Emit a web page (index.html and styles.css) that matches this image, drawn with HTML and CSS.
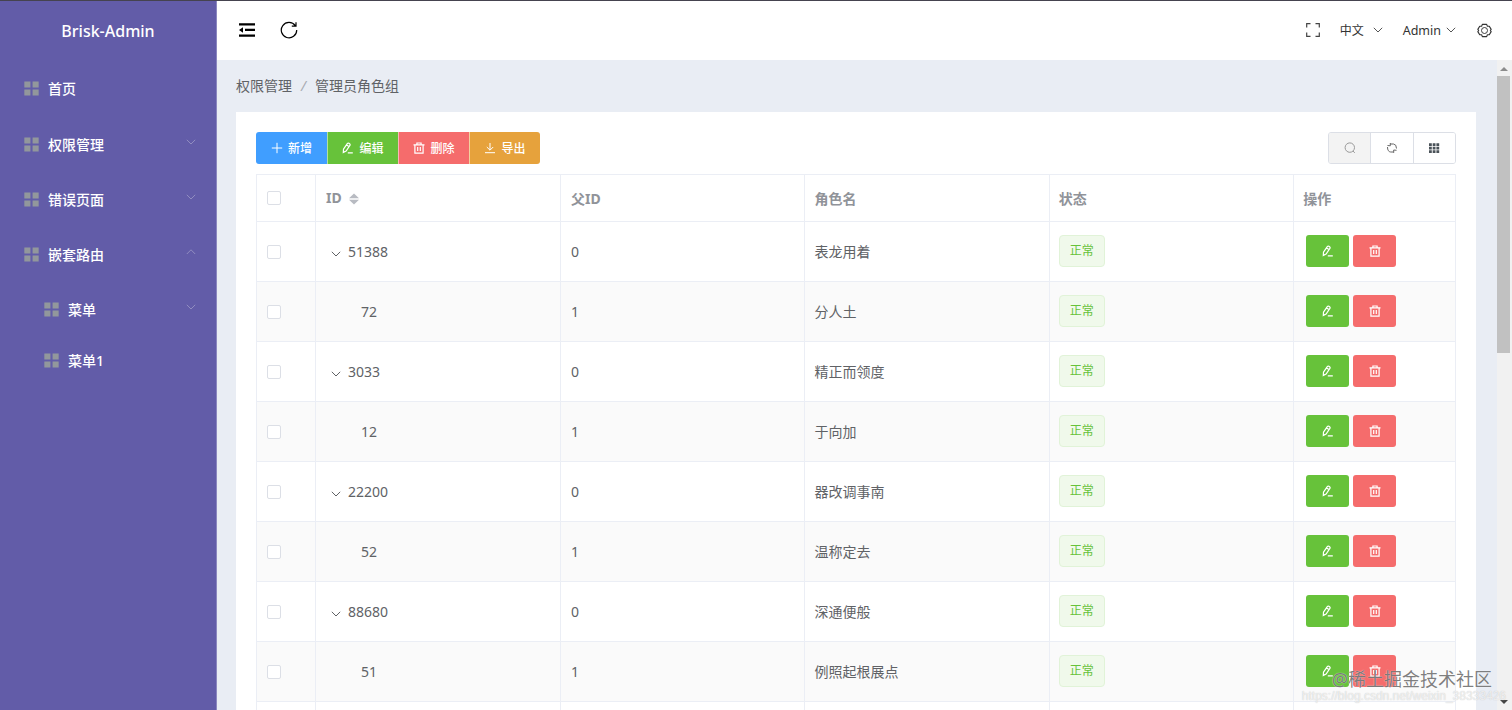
FILE: index.html
```html
<!DOCTYPE html>
<html lang="zh-CN">
<head>
<meta charset="UTF-8">
<meta name="viewport" content="width=device-width, initial-scale=1.0">
<title>Brisk-Admin</title>
<link rel="stylesheet" href="styles.css">
</head>
<body>
<!-- icons -->
<svg class="sprite" width="0" height="0">
<symbol id="i-menu" viewBox="0 0 14 14"><path fill="currentColor" d="M.3.500h5.700v5.500H.3zM8 .500h5.700v5.500H8zM.3 8h5.700v5.500H.3zM8 8h5.700v5.500H8z"/></symbol>
<symbol id="i-down" viewBox="0 0 10 10"><path d="M.8 2.800 5 7l4.200-4.200" fill="none" stroke="currentColor"/></symbol>
<symbol id="i-up" viewBox="0 0 10 10"><path d="M.8 7 5 2.800 9.200 7" fill="none" stroke="currentColor"/></symbol>
<symbol id="i-edit" viewBox="0 0 12 12"><path d="M1.500 7.200 5.300 1.600Q6 .700 6.900 1.300L7.600 1.800Q8.500 2.500 7.900 3.400L4.100 9 1.300 10.400ZM4.500 2.900 7 4.600M5.800 10.900h5" fill="none" stroke="currentColor" stroke-width="1.200"/></symbol>
<symbol id="i-delete" viewBox="0 0 12 12"><path d="M.500 2.900h11M3.900 2.700V1h4.200v1.700M1.900 2.900V11.200h8.200V2.900M4.700 5v4M7.300 5v4" fill="none" stroke="currentColor" stroke-width="1.200"/></symbol>
</svg>

<div class="container">
<aside class="sidebar">
<div class="logo">Brisk-Admin</div>
<nav class="menu">
<a class="menu-item home"><svg class="menu-icon"><use href="#i-menu"/></svg>首页</a>
<a class="menu-item"><svg class="menu-icon"><use href="#i-menu"/></svg>权限管理<svg class="arrow"><use href="#i-down"/></svg></a>
<a class="menu-item"><svg class="menu-icon"><use href="#i-menu"/></svg>错误页面<svg class="arrow"><use href="#i-down"/></svg></a>
<a class="menu-item"><svg class="menu-icon"><use href="#i-menu"/></svg>嵌套路由<svg class="arrow"><use href="#i-up"/></svg></a>
<a class="menu-item sub"><svg class="menu-icon"><use href="#i-menu"/></svg>菜单<svg class="arrow"><use href="#i-down"/></svg></a>
<a class="menu-item sub last"><svg class="menu-icon"><use href="#i-menu"/></svg>菜单1</a>
</nav>
</aside>

<div class="main">
<header class="header">
<svg class="fold" viewBox="0 0 16 14"><path fill="#000" d="M0 .300h16v2.300H0zM6 5.800h10v2.300H6zM0 11.400h16v2.300H0zM0 7l4-2.800v5.600z"/></svg>
<svg class="reload" viewBox="0 0 18 18"><path d="M15.300 4.700A7.700 7.700 0 1 0 16.700 9M16 1.200V5.200H11.800" fill="none" stroke="#000" stroke-width="1.200"/></svg>
<div class="header-right">
<svg class="full" viewBox="0 0 14 14"><path d="M.700 4.500V.700H4.500M9.500.700h3.800V4.500M13.300 9.500v3.800H9.500M4.500 13.300H.700V9.500" fill="none" stroke="#444" stroke-width="1.200"/></svg>
<span class="lang">中文</span>
<svg class="caret"><use href="#i-down"/></svg>
<span class="user">Admin</span>
<svg class="caret"><use href="#i-down"/></svg>
<svg class="setting" viewBox="0 0 16 16" fill="none" stroke="#333"><path stroke-linejoin="round" stroke-width="1.200" d="M5.700 1.500h4.600l.8 2h2l2 3.300L14.200 8l.9 1.200-2 3.300h-2l-.8 2H5.700l-.8-2h-2l-2-3.300L1.800 8 .900 6.800l2-3.300h2z"/><circle cx="8" cy="8" r="3.200"/></svg>
</div>
</header>

<div class="content">
<div class="page">
<div class="breadcrumb"><span>权限管理</span><i>/</i><span>管理员角色组</span></div>
<div class="card">
<div class="toolbar">
<div class="btn-group">
<button class="btn primary"><svg viewBox="0 0 12 12"><path d="M6 .800v10.400M.800 6h10.400" stroke="#fff"/></svg>新增</button>
<button class="btn success"><svg><use href="#i-edit"/></svg>编辑</button>
<button class="btn danger"><svg><use href="#i-delete"/></svg>删除</button>
<button class="btn warning"><svg viewBox="0 0 12 12"><path d="M6 1v7M2.800 5 6 8.200 9.200 5M1 10.700h10" fill="none" stroke="#fff"/></svg>导出</button>
</div>
<div class="tools">
<button class="tool active"><svg viewBox="0 0 12 12"><circle cx="5.800" cy="5.600" r="4.700" fill="none" stroke="#999"/><path d="m9 9 1.800 1.900" stroke="#999"/></svg></button>
<button class="tool"><svg viewBox="0 0 12 12"><path d="M4.200 2H7.500Q10.500 2.300 10.500 6.500M1.500 5Q1.500 9.700 4.700 10H7.500M1.500 3.500 4.300 3.800V1M10.500 8.300 7.700 8V10.900" fill="none" stroke="#666"/></svg></button>
<button class="tool"><svg viewBox="0 0 12 12"><path d="M1 1.300h2.800v2.600H1zM4.700 1.300h2.800v2.600H4.700zM8.400 1.300h2.800v2.600H8.400zM1 4.800h2.800v2.600H1zM4.700 4.800h2.800v2.600H4.700zM8.400 4.800h2.800v2.600H8.400zM1 8.300h2.800v2.600H1zM4.700 8.300h2.800v2.600H4.700zM8.400 8.300h2.800v2.600H8.400z" fill="#4a5258"/></svg></button>
</div>
</div>

<table class="table">
<colgroup><col class="c-check"><col class="c-id"><col class="c-pid"><col class="c-name"><col class="c-status"><col></colgroup>
<thead>
<tr><th><span class="check"></span></th><th>ID<svg class="sort" viewBox="0 0 10 12"><path fill="#b8bbc2" d="m5 .500 5 4.700H0zM5 11.500 0 6.800h10z"/></svg></th><th>父ID</th><th>角色名</th><th>状态</th><th>操作</th></tr>
</thead>
<tbody>
<tr>
<td><span class="check"></span></td>
<td class="parent"><svg class="expand"><use href="#i-down"/></svg>51388</td>
<td>0</td>
<td>表龙用着</td>
<td><span class="tag">正常</span></td>
<td class="ops"><button class="btn success"><svg><use href="#i-edit"/></svg></button><button class="btn danger"><svg><use href="#i-delete"/></svg></button></td>
</tr>
<tr>
<td><span class="check"></span></td>
<td class="child">72</td>
<td>1</td>
<td>分人土</td>
<td><span class="tag">正常</span></td>
<td class="ops"><button class="btn success"><svg><use href="#i-edit"/></svg></button><button class="btn danger"><svg><use href="#i-delete"/></svg></button></td>
</tr>
<tr>
<td><span class="check"></span></td>
<td class="parent"><svg class="expand"><use href="#i-down"/></svg>3033</td>
<td>0</td>
<td>精正而领度</td>
<td><span class="tag">正常</span></td>
<td class="ops"><button class="btn success"><svg><use href="#i-edit"/></svg></button><button class="btn danger"><svg><use href="#i-delete"/></svg></button></td>
</tr>
<tr>
<td><span class="check"></span></td>
<td class="child">12</td>
<td>1</td>
<td>于向加</td>
<td><span class="tag">正常</span></td>
<td class="ops"><button class="btn success"><svg><use href="#i-edit"/></svg></button><button class="btn danger"><svg><use href="#i-delete"/></svg></button></td>
</tr>
<tr>
<td><span class="check"></span></td>
<td class="parent"><svg class="expand"><use href="#i-down"/></svg>22200</td>
<td>0</td>
<td>器改调事南</td>
<td><span class="tag">正常</span></td>
<td class="ops"><button class="btn success"><svg><use href="#i-edit"/></svg></button><button class="btn danger"><svg><use href="#i-delete"/></svg></button></td>
</tr>
<tr>
<td><span class="check"></span></td>
<td class="child">52</td>
<td>1</td>
<td>温称定去</td>
<td><span class="tag">正常</span></td>
<td class="ops"><button class="btn success"><svg><use href="#i-edit"/></svg></button><button class="btn danger"><svg><use href="#i-delete"/></svg></button></td>
</tr>
<tr>
<td><span class="check"></span></td>
<td class="parent"><svg class="expand"><use href="#i-down"/></svg>88680</td>
<td>0</td>
<td>深通便般</td>
<td><span class="tag">正常</span></td>
<td class="ops"><button class="btn success"><svg><use href="#i-edit"/></svg></button><button class="btn danger"><svg><use href="#i-delete"/></svg></button></td>
</tr>
<tr>
<td><span class="check"></span></td>
<td class="child">51</td>
<td>1</td>
<td>例照起根展点</td>
<td><span class="tag">正常</span></td>
<td class="ops"><button class="btn success"><svg><use href="#i-edit"/></svg></button><button class="btn danger"><svg><use href="#i-delete"/></svg></button></td>
</tr>
<tr><td></td><td></td><td></td><td></td><td></td><td></td></tr>
</tbody>
</table>
</div>
</div>
<div class="scrollbar">
<svg viewBox="0 0 8 4"><path fill="#8b8b8b" d="M4 0 8 4H0z"/></svg>
<div class="thumb"></div>
<svg viewBox="0 0 8 4"><path fill="#444" d="M0 0h8L4 4z"/></svg>
</div>
</div>
</div>
</div>

<div class="watermark">@稀土掘金技术社区</div>
<div class="watermark-url">https://blog.csdn.net/weixin_38333426</div>
</body>
</html>
```
FILE: styles.css
```css
* {
    box-sizing: border-box;
}

body {
    margin: 0;
    font-family: "Noto Sans", "Noto Sans CJK SC", sans-serif;
    font-size: 14px;
    color: #606266;
    overflow: hidden;
}

.sprite {
    position: absolute;
}

svg {
    flex: none;
}

.container {
    display: flex;
    height: 710px;
    border-top: 1px solid #45434f;
}

/* sidebar */
.sidebar {
    width: 217px;
    flex: none;
    background: #625ca8;
    border-right: 1px solid #8b87bf;
    color: #fff;
}

.logo {
    height: 58px;
    line-height: 60px;
    text-align: center;
    font-size: 16px;
    font-weight: 500;
}

.menu-item {
    display: flex;
    align-items: center;
    height: 55px;
    padding: 0 20px 0 24px;
    font-weight: 500;
}

.menu-item.home {
    height: 57px;
}

.menu-item.sub {
    padding-left: 44px;
}

.menu-item.last {
    height: 47px;
}

.menu-icon {
    width: 15px;
    height: 15px;
    margin: 2px 9px 0 0;
    color: #92979c;
}

.arrow {
    width: 10px;
    height: 10px;
    margin: -4px 0 0 auto;
    color: #918dc0;
}

/* header */
.main {
    flex: 1;
    min-width: 0;
    display: flex;
    flex-direction: column;
}

.header {
    height: 59px;
    flex: none;
    display: flex;
    align-items: center;
    padding: 0 20px 2px 22px;
    background: #fff;
}

.fold {
    width: 16px;
    height: 14px;
    margin-right: 25px;
}

.reload {
    width: 18px;
    height: 18px;
}

.header-right {
    display: flex;
    align-items: center;
    margin-left: auto;
    font-size: 12px;
    color: #333;
}

.full {
    width: 14px;
    height: 14px;
    margin-right: 20px;
}

.caret {
    width: 10px;
    height: 10px;
    color: #555;
}

.lang {
    margin-right: 9px;
}

.user {
    font-size: 12.500px;
    margin: 1px 5px 0 20px;
}

.setting {
    width: 15px;
    height: 15px;
    margin: 2px 0 0 21px;
}

/* content */
.content {
    flex: 1;
    min-height: 0;
    display: flex;
    background: #e9edf4;
}

.page {
    width: 1280px;
    flex: none;
    padding: 0 21px 0 19px;
    overflow: hidden;
}

.breadcrumb {
    height: 52px;
    line-height: 52px;
}

.breadcrumb i {
    margin: 0 9px;
    color: #a8abb2;
}

.card {
    background: #fff;
    padding: 20px;
}

.toolbar {
    display: flex;
    justify-content: space-between;
    margin-bottom: 10px;
}

.btn-group, .tools {
    display: flex;
}

.btn {
    display: flex;
    align-items: center;
    justify-content: center;
    height: 32px;
    padding: 0;
    border: none;
    border-radius: 3px;
    color: #fff;
    font-family: inherit;
    font-size: 12px;
    font-weight: 500;
}

.btn svg {
    width: 12px;
    height: 12px;
}

.btn-group .btn {
    width: 71px;
    border-radius: 0;
}

.btn-group .btn + .btn {
    border-left: 1px solid rgba(255, 255, 255, .5);
}

.btn-group .btn:first-child {
    border-radius: 3px 0 0 3px;
}

.btn-group .btn:last-child {
    border-radius: 0 3px 3px 0;
}

.btn-group svg {
    margin-right: 5px;
}

.primary {
    background: #409eff;
}

.success {
    background: #67c23a;
}

.danger {
    background: #f56c6c;
}

.warning {
    background: #e6a23c;
}

.tools {
    border: 1px solid #dcdfe6;
    border-radius: 3px;
    overflow: hidden;
}

.tool {
    display: flex;
    align-items: center;
    justify-content: center;
    width: 41px;
    height: 30px;
    padding: 0;
    border: none;
    background: #fff;
}

.tool + .tool {
    width: 42.500px;
    border-left: 1px solid #dcdfe6;
}

.tool.active {
    background: #f3f3f3;
}

.tool svg {
    width: 12px;
    height: 12px;
}

/* table */
.table {
    width: 1200px;
    table-layout: fixed;
    border-collapse: separate;
    border-spacing: 0;
    border-top: 1px solid #ebeef5;
    border-left: 1px solid #ebeef5;
}

.c-check {
    width: 59px;
}

.c-id {
    width: 245px;
}

.c-pid, .c-name, .c-status {
    width: 244.400px;
}

th, td {
    height: 60px;
    padding: 0 9px 1px;
    border-right: 1px solid #ebeef5;
    border-bottom: 1px solid #ebeef5;
    text-align: left;
    vertical-align: middle;
}

th:nth-child(-n+3), td:nth-child(-n+3) {
    padding-left: 10px;
}

th {
    height: 47px;
    color: #909399;
    font-weight: 700;
}

tbody tr:nth-child(even) {
    background: #fafafa;
}

.check {
    display: block;
    width: 14px;
    height: 14px;
    margin-top: 1px;
    border: 1px solid #dcdfe6;
    border-radius: 2px;
    background: #fff;
}

.sort {
    width: 10px;
    height: 12px;
    margin-left: 7px;
    vertical-align: -2px;
}

.table .parent {
    padding-left: 15px;
}

.table .child {
    padding-left: 45px;
}

.expand {
    width: 10px;
    height: 10px;
    margin-right: 7px;
    vertical-align: -2px;
}

.tag {
    display: block;
    width: 46px;
    height: 32px;
    line-height: 30px;
    border: 1px solid #e1f3d8;
    border-radius: 4px;
    background: #f0f9eb;
    color: #67c23a;
    font-size: 12px;
    text-align: center;
}

.ops .btn {
    display: inline-flex;
    width: 43px;
    margin-left: 3px;
    vertical-align: middle;
}

.ops .btn + .btn {
    margin-left: 4px;
}

/* scrollbar */
.scrollbar {
    display: flex;
    flex-direction: column;
    align-items: center;
    width: 15px;
    padding: 7px 2px 6px 0;
    background: #f1f1f1;
}

.scrollbar svg {
    width: 8px;
    height: 4px;
}

.thumb {
    width: 13px;
    height: 277px;
    margin: 5px 0 auto;
    background: #c1c1c1;
}

/* watermark */
.watermark {
    position: absolute;
    right: 20px;
    bottom: 22px;
    font-size: 18px;
    line-height: 18px;
    color: rgba(70, 70, 70, .7);
    text-shadow: 0 0 1px #fff;
}

.watermark-url {
    position: absolute;
    right: 6px;
    bottom: 8px;
    font-family: "Liberation Sans", sans-serif;
    font-size: 12px;
    line-height: 12px;
    color: rgba(255, 255, 255, .7);
    text-shadow: 0 0 1px #bbb;
}
```
